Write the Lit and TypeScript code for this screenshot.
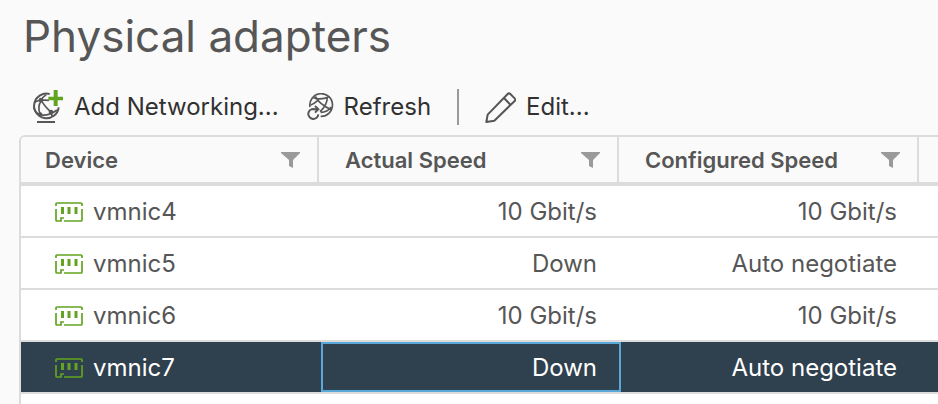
import { LitElement, html, css } from "lit";
import { customElement, property, state } from "lit/decorators.js";
import { classMap } from "lit/directives/class-map.js";

interface Adapter {
  device: string;
  actual: string;
  configured: string;
}

const networkAddIcon = html`<svg class="icon" width="33" height="36" viewBox="12 9 99 108" aria-hidden="true">
  <g fill="none" stroke="#565656" stroke-width="6">
    <path d="M68 24A37 37 0 1 0 95 64" />
    <path d="M22 50Q32 40 66 43M42 43Q46 34 58 26M42 43Q54 62 72 79M20 64Q26 84 42 87Q66 90 90 72M42 46Q30 62 40 86M72 79L76 92" stroke-width="5" />
    <path d="M30 108H84" />
  </g>
  <g fill="#565656"><circle cx="42" cy="42" r="7" /><circle cx="40" cy="85" r="6" /><circle cx="72" cy="78" r="7" /></g>
  <path d="M80 12h12v20h16v11H92v17H80V43H64V32h16z" fill="#62a420" />
</svg>`;

const refreshIcon = html`<svg class="icon" width="27" height="28" viewBox="21 24 81 84" aria-hidden="true">
  <g fill="none" stroke="#565656" stroke-width="5">
    <path d="M30 66A34 34 0 1 1 62 94" />
    <path d="M40 38Q62 46 86 36M46 34Q58 58 94 74M82 36Q82 60 60 80M32 60Q42 56 54 46M62 82Q82 82 94 66" />
    <path d="M48 74A15 15 0 1 0 55 88M36 73H54M45 63L55 73L45 83" stroke-width="6" />
  </g>
</svg>`;

const pencilIcon = html`<svg class="icon" width="31" height="31" viewBox="571 27 93 93" aria-hidden="true">
  <path
    d="M575 117L579 95L639 33Q643 29 647 33L660 46Q664 50 660 54L599 113ZM628 45L648 66"
    fill="none" stroke="#565656" stroke-width="6" stroke-linejoin="round" />
</svg>`;

const nicIcon = html`<svg class="nic" width="28" height="22" viewBox="0 0 28 22" aria-hidden="true">
  <path
    d="M1 5V3Q1 2 2 2H26Q27 2 27 3V5M27 8V19Q27 20 26 20H9M1 8V19Q1 20 2 20H6V17H9"
    fill="none" stroke="#62a420" stroke-width="1.7" />
  <path d="M6 6h3v7H6zM12.5 6h3v7h-3zM19.5 6h3v7h-3z" fill="#62a420" />
</svg>`;

@customElement("filter-header")
export class FilterHeader extends LitElement {
  @property() label = "";

  static styles = css`
    :host { display: flex; align-items: center; justify-content: space-between; height: 100%; }
    button { border: 0; padding: 0; background: none; display: flex; cursor: pointer; }
  `;

  render() {
    return html`<span>${this.label}</span>
      <button aria-label="Filter ${this.label}">
        <svg width="20" height="16" viewBox="0 0 20 16" aria-hidden="true">
          <path d="M0 0H19V1L12 8V16L8 14V8L0 1Z" fill="#9a9a9a" />
        </svg>
      </button>`;
  }
}

@customElement("app-root")
export class AppRoot extends LitElement {
  @state() private selected = "vmnic7";

  private adapters: Adapter[] = [
    { device: "vmnic4", actual: "10 Gbit/s", configured: "10 Gbit/s" },
    { device: "vmnic5", actual: "Down", configured: "Auto negotiate" },
    { device: "vmnic6", actual: "10 Gbit/s", configured: "10 Gbit/s" },
    { device: "vmnic7", actual: "Down", configured: "Auto negotiate" },
  ];

  static styles = css`
    :host {
      display: flex;
      flex-direction: column;
      box-sizing: border-box;
      min-height: 100vh;
      padding-left: 19px;
      overflow: hidden;
      background: #fafafa;
      color: #565656;
      font-family: Inter, "Liberation Sans", sans-serif;
      font-size: 24px;
    }
    h1 {
      margin: 0;
      padding: 8px 0 0 4px;
      font-size: 44px;
      line-height: 56px;
      font-weight: 400;
    }
    .toolbar {
      display: flex;
      align-items: center;
      height: 56px;
      padding: 15px 0 0 12px;
      box-sizing: content-box;
    }
    .action {
      display: flex;
      align-items: center;
      gap: 10px;
      border: 0;
      padding: 0;
      background: none;
      color: #313131;
      font: inherit;
      line-height: 32px;
      cursor: pointer;
    }
    .action + .action { margin-left: 28px; }
    .divider {
      width: 2px;
      height: 36px;
      margin: 0 26px;
      background: #9a9a9a;
    }
    .icon, .nic { flex: none; display: block; }
    .grid {
      flex: 1;
      border: 2px solid #dcdcdc;
      border-width: 2px 0 0 2px;
      border-top-left-radius: 6px;
      background: #fff;
      overflow: hidden;
    }
    table {
      width: 100%;
      border-collapse: separate;
      border-spacing: 0;
      table-layout: fixed;
    }
    .col { width: 300px; }
    th {
      height: 45px;
      padding: 0;
      border-bottom: 4px solid #dcdcdc;
      background: #fafafa;
      text-align: left;
      font-size: 22px;
      font-weight: 600;
    }
    .head {
      height: 45px;
      margin-right: 2px;
      padding: 0 16px 0 24px;
      border-right: 2px solid #dcdcdc;
    }
    td {
      height: 48px;
      box-sizing: content-box;
      padding: 2px 24px 0 0;
      border-bottom: 2px solid #dcdcdc;
      text-align: right;
      line-height: 32px;
    }
    .device {
      display: flex;
      align-items: center;
      gap: 10px;
      padding-left: 34px;
    }
    .selected { background: #2f404e; color: #fff; }
    .selected .focus { box-shadow: inset 0 0 0 2px #5aa7da; }
  `;

  render() {
    return html`
      <h1>Physical adapters</h1>
      <div class="toolbar" role="toolbar">
        <button class="action">${networkAddIcon}Add Networking...</button>
        <button class="action">${refreshIcon}Refresh</button>
        <span class="divider"></span>
        <button class="action">${pencilIcon}Edit...</button>
      </div>
      <div class="grid">
        <table>
          <colgroup><col class="col" /><col class="col" /><col class="col" /><col /></colgroup>
          <thead>
            <tr>
              ${["Device", "Actual Speed", "Configured Speed"].map(
                (label) => html`<th scope="col"><div class="head"><filter-header label=${label}></filter-header></div></th>`
              )}
              <th></th>
            </tr>
          </thead>
          <tbody>
            ${this.adapters.map(
              (a) => html`<tr
                class=${classMap({ selected: a.device === this.selected })}
                @click=${() => (this.selected = a.device)}
              >
                <td><div class="device">${nicIcon}<span>${a.device}</span></div></td>
                <td class="focus">${a.actual}</td>
                <td>${a.configured}</td>
                <td></td>
              </tr>`
            )}
          </tbody>
        </table>
      </div>
    `;
  }
}
